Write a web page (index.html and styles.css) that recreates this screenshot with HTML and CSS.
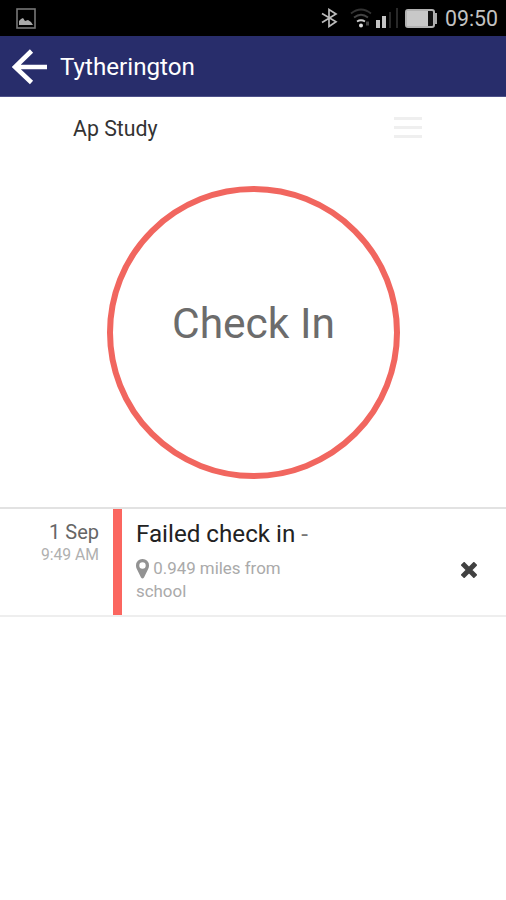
FILE: index.html
```html
<!DOCTYPE html>
<html lang="en">
<head>
<meta charset="utf-8">
<title>Tytherington</title>
<link rel="stylesheet" href="styles.css">
</head>
<body>
<div class="status">
  <svg class="picture" width="20" height="21" viewBox="0 0 20 21"><rect x="1" y="1" width="18" height="19" fill="none" stroke="#777" stroke-width="1.6"/><path d="M3 17v-4l2-2 2-1 2 3 3-1 3 2 2 3z" fill="#aaa"/></svg>
  <div class="status-right">
    <svg class="bluetooth" width="18" height="20" viewBox="0 0 18 20"><path d="M2 5.500l14 8.300-7 4.700v-17l7 4.500-14 8.500" fill="none" stroke="#bbb" stroke-width="1.700"/></svg>
    <svg class="wifi" width="22" height="20" viewBox="0 0 22 20"><g fill="none" stroke-width="1.800"><path d="M1 5.500Q11-2.500 21 5.500" stroke="#333"/><path d="M4 9.500Q11 4 18 9.500" stroke="#444"/><path d="M7 13.500Q11 11 15 13.500" stroke="#ccc"/></g><circle cx="11" cy="17.500" r="2" fill="#ddd"/><path d="M17.500 13.500v4" stroke="#444" stroke-width="3"/></svg>
    <svg class="signal" width="22" height="20" viewBox="0 0 22 20"><path d="M0 12h4v8H0zM6 8h4v12H6z" fill="#c4c4c4"/><path d="M13 4h2v16h-2zM20 0h2v20h-2z" fill="#292929"/></svg>
    <svg class="battery" width="33" height="19" viewBox="0 0 33 19"><rect x="1" y="1" width="28" height="17" rx="2" fill="#111" stroke="#b2b2b2" stroke-width="2"/><path d="M2 2h21v15H2z" fill="#c8c8c8"/><path d="M29 4h3v11h-3z" fill="#aaa"/></svg>
    <span class="clock">09:50</span>
  </div>
</div>
<header class="bar">
  <svg width="36" height="36" viewBox="0 0 36 36"><path d="M35 18H3M19.500 2L3 18l16.500 15.500" fill="none" stroke="#fff" stroke-width="4.600"/></svg>
  <h1>Tytherington</h1>
</header>
<main>
  <div class="lesson">
    <span>Ap Study</span>
    <div class="menu"><i></i><i></i><i></i></div>
  </div>
  <div class="check">Check In</div>
  <section class="entry">
    <div class="when"><div class="date">1 Sep</div><div class="time">9:49 AM</div></div>
    <div class="what">
      <div class="title">Failed check in <span>-</span></div>
      <div class="place"><svg width="13" height="20" viewBox="0 0 13 20"><path fill-rule="evenodd" d="M6.500 0A6.400 6.400 0 0 0 0 6.500c0 2 .6 3 1.200 4.300L5 18.500q1.500 2 3 0l3.800-7.700C12.400 9.500 13 8.500 13 6.500A6.400 6.400 0 0 0 6.500 0zm0 3.300a3.200 3.200 0 1 1 0 6.400 3.200 3.200 0 0 1 0-6.400z" fill="#929292"/></svg> <span>0.949 miles from</span><br><span>school</span></div>
    </div>
    <svg class="cross" width="16" height="16" viewBox="0 0 16 16"><path d="M3.200 3.200l9.600 9.600m0-9.600l-9.600 9.600" stroke="#414141" stroke-width="5" stroke-linecap="square"/></svg>
  </section>
</main>
</body>
</html>
```

FILE: styles.css
```css
* { box-sizing: border-box; }
body { margin: 0; background: #fff; font-family: Roboto, sans-serif; }
svg { display: block; flex: none; }
.status { height: 36px; background: #000; display: flex; justify-content: space-between; padding: 0 8px 0 16px; }
.picture { margin-top: 8px; }
.status-right { display: flex; }
.bluetooth { margin: 8px 12px 0 0; }
.wifi { margin: 8px 4px 0 0; }
.signal { margin: 8px 7px 0 0; }
.battery { margin: 9px 7px 0 0; }
.clock { width: 53px; font-size: 21.3px; line-height: 38px; color: #c2c2c2; white-space: nowrap; }
.bar { height: 61px; background: #282d6b; border-bottom: 1px solid #4e5189; display: flex; align-items: center; gap: 12px; padding: 1px 12px 0; }
.bar h1 { margin: 0; font-size: 24.2px; line-height: 30px; font-weight: 400; color: #fff; }
.lesson { height: 89px; display: flex; justify-content: space-between; padding: 17px 84px 0 73px; font-size: 21.3px; line-height: 30px; color: #333; }
.menu { width: 28px; padding-top: 3px; display: flex; flex-direction: column; gap: 6px; }
.menu i { height: 3px; background: #efefef; }
.check { width: 293px; height: 293px; margin: 0 0 28px 107px; border: 6px solid #f1665f; border-radius: 50%; display: flex; align-items: center; justify-content: center; padding-bottom: 19px; font-size: 42.500px; color: #6c6c6c; }
.entry { height: 110px; border-top: 2px solid #e2e2e2; border-bottom: 2px solid #eee; display: flex; }
.when { width: 113px; padding: 11px 14px 0 0; text-align: right; }
.date { font-size: 20px; line-height: 24px; color: #666; }
.time { font-size: 15.7px; line-height: 21px; color: #b0b0b0; }
.what { width: 348px; border-left: 9px solid #fb665f; padding: 9px 0 0 14px; }
.title { font-size: 24.200px; line-height: 32px; color: #222; }
.title span { color: #777; }
.place { margin-top: 7px; font-size: 16.900px; line-height: 23px; color: #aaa; }
.place svg { display: inline-block; vertical-align: -5px; }
.cross { margin-top: 53px; }
```
